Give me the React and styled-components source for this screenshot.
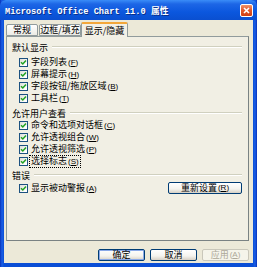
import React from 'react';
import styled, { createGlobalStyle } from 'styled-components';

const Global = createGlobalStyle`
  html, body { margin: 0; padding: 0; background: #ffffff; }
  body { font-family: "Noto Sans CJK SC", "Liberation Sans", sans-serif; }
`;

const Window = styled.div`
  width: 257px;
  height: 267px;
  display: flex;
  flex-direction: column;
  background: linear-gradient(to right, #0831b8 0px, #1a5fe6 2px, #0a4ed6 4px, #0a4ed6 253px, #1a5fe6 255px, #0831b8 257px);
  box-sizing: border-box;
`;

const TitleBar = styled.div`
  height: 20px;
  display: flex;
  align-items: center;
  justify-content: space-between;
  padding: 0 4px 0 5px;
  background: linear-gradient(to bottom, #3a8cf8 0%, #1d66e6 20%, #0b57de 60%, #0a4fd0 100%);
  border-radius: 6px 6px 0 0;
`;

const Title = styled.span`
  font-family: "Liberation Mono", "Noto Sans CJK SC", monospace;
  font-weight: bold;
  font-size: 8.7px;
  color: #ffffff;
  text-shadow: 1px 1px 0 #0a2f8a;
`;

const CloseButton = styled.div`
  width: 13px;
  height: 13px;
  box-sizing: border-box;
  border: 1px solid #ffffff;
  border-radius: 2px;
  background: linear-gradient(to bottom, #f0946a 0%, #e2592c 45%, #cd3d12 100%);
  display: flex;
  align-items: center;
  justify-content: center;
  margin-top: 1px;
`;

const Body = styled.div`
  flex: 1;
  margin: 0 4px 4px 4px;
  background: #ece9d8;
  padding: 2px 4px 0 2px;
  display: flex;
  flex-direction: column;
`;

const Tabs = styled.div`
  height: 14px;
  display: flex;
  align-items: flex-end;
  position: relative;
  z-index: 1;
`;

const Tab = styled.div`
  width: ${p => p.$w}px;
  margin-left: ${p => p.$ml || 0}px;
  height: ${p => (p.$active ? 15 : 12)}px;
  margin-bottom: ${p => (p.$active ? -1 : 0)}px;
  box-sizing: border-box;
  border: 1px solid #919b9c;
  border-bottom: ${p => (p.$active ? 'none' : '1px solid #919b9c')};
  border-top: ${p => (p.$active ? '2px solid #f3a73a' : '1px solid #919b9c')};
  border-radius: 2px 2px 0 0;
  background: ${p => (p.$active ? '#f2f0e6' : 'linear-gradient(to bottom, #ffffff, #ecebe5)')};
  font-size: 9px;
  line-height: 10px;
  color: #000000;
  display: flex;
  justify-content: center;
  align-items: center;
`;

const Panel = styled.div`
  height: 205px;
  box-sizing: border-box;
  border: 1px solid #919b9c;
  border-right-color: #7a8283;
  border-bottom-color: #7a8283;
  background: #f1efe4;
  padding: 4px 6px 0 0;
  display: flex;
  flex-direction: column;
`;

const GroupHeader = styled.div`
  height: 12px;
  display: flex;
  align-items: center;
  padding-left: 5px;
  margin-bottom: ${p => p.$after}px;
  margin-top: ${p => p.$before || 0}px;
  font-size: 9px;
  color: #000000;
`;

const HeaderLine = styled.div`
  flex: 1;
  margin-left: 4px;
  height: 0;
  border-top: 1px solid #d0d0bf;
  border-bottom: 1px solid #ffffff;
`;

const Row = styled.div`
  height: 12px;
  display: flex;
  align-items: center;
  justify-content: space-between;
  padding-left: 12px;
`;

const CheckLabel = styled.div`
  display: flex;
  align-items: center;
  font-size: 9px;
  color: #000000;
  white-space: nowrap;
`;

const Box = styled.div`
  width: 9px;
  height: 9px;
  box-sizing: border-box;
  border: 1px solid #1c5180;
  background: linear-gradient(135deg, #dcdcd7 0%, #ffffff 80%);
  display: flex;
  align-items: center;
  justify-content: center;
  margin-right: 2px;
`;

const LabelText = styled.span`
  line-height: 10px;
  padding: 0 1px;
  border: 1px dotted ${p => (p.$focus ? '#000000' : 'transparent')};
  margin-left: -1px;
`;

const Key = styled.span`
  font-family: "Liberation Sans", sans-serif;
  font-size: 8px;
  margin-left: 1px;
  u { text-decoration: underline; }
`;

const Button = styled.div`
  width: ${p => p.$w}px;
  height: 12px;
  box-sizing: border-box;
  border: 1px solid ${p => (p.$disabled ? '#c9c7ba' : '#003c74')};
  border-radius: 2px;
  background: ${p => (p.$disabled ? '#f5f4ea' : 'linear-gradient(to bottom, #ffffff 0%, #f4f3ee 60%, #d6d0c5 100%)')};
  box-shadow: ${p => (p.$default ? 'inset 0 0 0 1px #8aa9e8' : 'none')};
  color: ${p => (p.$disabled ? '#aca899' : '#000000')};
  font-size: 9px;
  line-height: 10px;
  display: flex;
  align-items: center;
  justify-content: center;
`;

const ButtonRow = styled.div`
  display: flex;
  justify-content: flex-end;
  gap: 5px;
  margin-top: 8px;
`;

function Check() {
  return (
    <svg width="7" height="7" viewBox="0 0 7 7">
      <path d="M1 3.2 L2.8 5 L6 1.4" fill="none" stroke="#21a121" strokeWidth="1.5" />
    </svg>
  );
}

function CheckRow({ label, k, focus, children }) {
  return (
    <Row>
      <CheckLabel>
        <Box><Check /></Box>
        <LabelText $focus={focus}>
          {label}<Key>(<u>{k}</u>)</Key>
        </LabelText>
      </CheckLabel>
      {children}
    </Row>
  );
}

export default function App() {
  return (
    <>
      <Global />
      <Window>
        <TitleBar>
          <Title>Microsoft Office Chart 11.0 属性</Title>
          <CloseButton>
            <svg width="7" height="7" viewBox="0 0 7 7">
              <path d="M1 1 L6 6 M6 1 L1 6" stroke="#ffffff" strokeWidth="1.6" />
            </svg>
          </CloseButton>
        </TitleBar>
        <Body>
          <Tabs>
            <Tab $w={32}>常规</Tab>
            <Tab $w={42} $ml={1}>边框/填充</Tab>
            <Tab $w={47} $active>显示/隐藏</Tab>
          </Tabs>
          <Panel>
            <GroupHeader $after={3}>默认显示<HeaderLine /></GroupHeader>
            <CheckRow label="字段列表" k="F" />
            <CheckRow label="屏幕提示" k="H" />
            <CheckRow label="字段按钮/拖放区域" k="B" />
            <CheckRow label="工具栏" k="T" />
            <GroupHeader $before={3} $after={0}>允许用户查看<HeaderLine /></GroupHeader>
            <CheckRow label="命令和选项对话框" k="C" />
            <CheckRow label="允许透视组合" k="W" />
            <CheckRow label="允许透视筛选" k="P" />
            <CheckRow label="选择标志" k="S" focus />
            <GroupHeader $before={2} $after={1}>错误<HeaderLine /></GroupHeader>
            <CheckRow label="显示被动警报" k="A">
              <Button $w={74}>重新设置<Key>(<u>R</u>)</Key></Button>
            </CheckRow>
          </Panel>
          <ButtonRow>
            <Button $w={47} $default>确定</Button>
            <Button $w={47}>取消</Button>
            <Button $w={47} $disabled>应用<Key>(<u>A</u>)</Key></Button>
          </ButtonRow>
        </Body>
      </Window>
    </>
  );
}
